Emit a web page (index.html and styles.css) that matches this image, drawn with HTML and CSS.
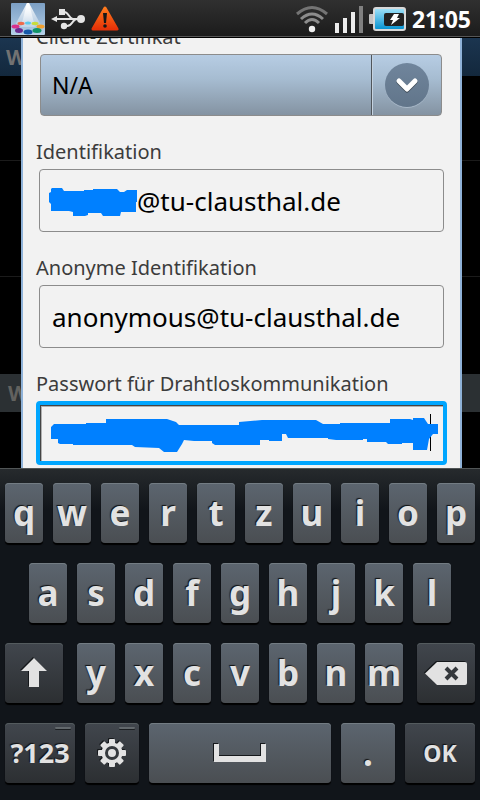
FILE: index.html
```html
<!DOCTYPE html>
<html lang="de">
<head>
    <meta charset="UTF-8">
    <meta name="viewport" content="width=device-width, initial-scale=1.0">
    <title>WLAN</title>
    <link rel="stylesheet" href="styles.css">
</head>
<body>
    <header class="statusbar">
        <div class="status-left">
            <svg width="34" height="32" viewBox="0 0 34 32">
                <defs>
                    <linearGradient id="sky" x1="0" y1="0" x2="0" y2="1">
                        <stop offset="0" stop-color="#7c9fc4"/>
                        <stop offset="1" stop-color="#b4d0e8"/>
                    </linearGradient>
                    <linearGradient id="beam" x1="0" y1="0" x2="0" y2="1">
                        <stop offset="0" stop-color="#fff"/>
                        <stop offset="1" stop-color="#fff" stop-opacity="0.15"/>
                    </linearGradient>
                </defs>
                <rect width="34" height="32" rx="1" fill="url(#sky)"/>
                <path d="M16 0h2l13 24H3z" fill="url(#beam)"/>
                <path d="M16 0h2l6 24H10z" fill="url(#beam)"/>
                <ellipse cx="17" cy="20" rx="3" ry="1.5" fill="#5cc8ea"/>
                <ellipse cx="10" cy="20.500" rx="3.500" ry="1.700" fill="#ee6a4a"/>
                <ellipse cx="24" cy="20.500" rx="3.500" ry="1.700" fill="#c8dc3c"/>
                <ellipse cx="4.500" cy="23.500" rx="4" ry="2" fill="#d8308c"/>
                <ellipse cx="29.500" cy="23.500" rx="4" ry="2" fill="#f0a030"/>
                <ellipse cx="8" cy="27.500" rx="4" ry="2.500" fill="#6a2c90"/>
                <ellipse cx="26" cy="27.500" rx="4.500" ry="2.500" fill="#109468"/>
                <ellipse cx="17" cy="29" rx="4.500" ry="2.500" fill="#1458a8"/>
            </svg>
            <svg width="34" height="22" viewBox="0 0 34 22" fill="none" stroke="#e4e4e4" stroke-width="2">
                <path d="M5 11h22"/>
                <path d="M11 4h2c5 0 5 7 9 7M13 18h3c6 0 5-7 10-7"/>
                <path d="M0 11l6-3v6zM8 1h6v6H8z" fill="#e4e4e4" stroke="none"/>
                <circle cx="30" cy="11" r="4" fill="#e4e4e4" stroke="none"/>
                <circle cx="13" cy="18" r="3.200" fill="#e4e4e4" stroke="none"/>
            </svg>
            <svg width="28" height="26" viewBox="0 0 28 26">
                <defs>
                    <linearGradient id="alert" x1="0" y1="0" x2="0" y2="1">
                        <stop offset="0" stop-color="#ff7a1c"/>
                        <stop offset="1" stop-color="#e63208"/>
                    </linearGradient>
                </defs>
                <path d="M14 2L26 23H2z" fill="url(#alert)" stroke="url(#alert)" stroke-width="3" stroke-linejoin="round"/>
                <path d="M12 7h4l-1 10h-2z" fill="#181818"/>
                <circle cx="14" cy="20" r="1.800" fill="#181818"/>
            </svg>
        </div>
        <div class="status-right">
            <svg width="34" height="28" viewBox="0 0 34 28" fill="none" stroke-width="3">
                <path d="M2 9q15-13 30 0" stroke="#747474"/>
                <path d="M6 14q11-10 22 0" stroke="#8c8c8c"/>
                <path d="M10 18q7-7 14 0" stroke="#8c8c8c"/>
                <circle cx="17" cy="24" r="3.200" fill="#eee"/>
            </svg>
            <svg width="28" height="28" viewBox="0 0 28 28" fill="#ececec">
                <path d="M0 18h4v10H0zM8 13h4v15H8zM16 7h4v21h-4z"/>
                <path d="M24 1h4v27h-4z" fill="#808080"/>
            </svg>
            <svg width="37" height="24" viewBox="0 0 37 24">
                <defs>
                    <linearGradient id="charge" x1="0" y1="0" x2="0" y2="1">
                        <stop offset="0" stop-color="#a4e4fa"/>
                        <stop offset="1" stop-color="#0090d0"/>
                    </linearGradient>
                </defs>
                <rect x="0" y="7" width="6" height="10" rx="1" fill="#c4c4c4"/>
                <rect x="5" y="1" width="31" height="22" rx="2" fill="url(#charge)" stroke="#d8d8d8" stroke-width="2"/>
                <rect x="15" y="6" width="20" height="13" rx="2" fill="#222"/>
                <path d="M25 7h5l-2 4h3l-9 7 2-5h-3z" fill="#fff"/>
            </svg>
            <span class="clock">21:05</span>
        </div>
    </header>

    <main class="screen">
        <div class="backdrop">
            <div class="backdrop-title">W</div>
            <div class="backdrop-row first"></div>
            <div class="backdrop-row"></div>
            <div class="backdrop-row last"></div>
            <div class="backdrop-title section">W</div>
        </div>

        <form class="dialog">
            <div class="field">
                <label for="cert">Client-Zertifikat</label>
                <div class="control select">
                    <select class="box dropdown" id="cert">
                        <option>N/A</option>
                    </select>
                    <span class="arrow">
                        <svg width="24" height="18" viewBox="0 0 24 18" fill="none" stroke-width="5" stroke-linecap="round" stroke-linejoin="round">
                            <path d="M4 6l8 8 8-8" stroke="#3c4854"/>
                            <path d="M4 5l8 8 8-8" stroke="#fff"/>
                        </svg>
                    </span>
                </div>
            </div>
            <div class="field">
                <label for="identity">Identifikation</label>
                <div class="control">
                    <input class="box identity" id="identity" type="text" value="@tu-clausthal.de">
                    <svg class="scribble" width="404" height="63" viewBox="0 0 404 63">
                        <path d="M10 24L12 23V20L13 19H23L25 22H45V21H54V20H78L81 23H85L88 21H98V33H97V43H82L81 47H64L62 44H49V46L46 47H34V43L30 42H12V35L10 33z"/>
                    </svg>
                </div>
            </div>
            <div class="field">
                <label for="anonymous">Anonyme Identifikation</label>
                <div class="control">
                    <input class="box" id="anonymous" type="text" value="anonymous@tu-clausthal.de">
                </div>
            </div>
            <div class="field">
                <label for="password">Passwort für Drahtloskommunikation</label>
                <div class="control focused">
                    <input class="box" id="password" type="password">
                    <svg class="scribble" width="411" height="64" viewBox="0 0 411 64">
                        <path class="caret" d="M394 13h1v37h-1z"/>
                        <path d="M15 26L18 23H50V22H70V18H131L140 21L143 24H203V21L226 19H280L287 23H304V22H354V18H374L377 19V17H388L392 23H402V33H397L393 38L391 49H377V42H366V43H352L350 41H331V38H327V39H300L292 38V37H252L250 33H246V40H233V39H224V44H179L176 42V40H158L148 39L146 43L141 51H128L123 47L99 46L96 44H37V43H24L22 42V38H15z"/>
                    </svg>
                </div>
            </div>
        </form>
    </main>

    <section class="keyboard">
        <div class="key-row">
            <button class="key">q</button>
            <button class="key">w</button>
            <button class="key">e</button>
            <button class="key">r</button>
            <button class="key">t</button>
            <button class="key">z</button>
            <button class="key">u</button>
            <button class="key">i</button>
            <button class="key">o</button>
            <button class="key">p</button>
        </div>
        <div class="key-row inset">
            <button class="key">a</button>
            <button class="key">s</button>
            <button class="key">d</button>
            <button class="key">f</button>
            <button class="key">g</button>
            <button class="key">h</button>
            <button class="key">j</button>
            <button class="key">k</button>
            <button class="key">l</button>
        </div>
        <div class="key-row">
            <button class="key dark shift" aria-label="Umschalt">
                <svg class="icon" width="26" height="30" viewBox="0 0 26 30">
                    <path d="M13 0l13 13h-8v16H8V13H0z"/>
                </svg>
            </button>
            <button class="key">y</button>
            <button class="key">x</button>
            <button class="key">c</button>
            <button class="key">v</button>
            <button class="key">b</button>
            <button class="key">n</button>
            <button class="key">m</button>
            <button class="key dark delete" aria-label="Löschen">
                <svg class="icon" width="42" height="23" viewBox="0 0 42 23">
                    <path d="M0 11.500L12 0h28q2 0 2 2v19q0 2-2 2H12z"/>
                    <path class="cut" d="M21 6l11 11M32 6L21 17"/>
                </svg>
            </button>
        </div>
        <div class="key-row">
            <button class="key dark wide more symbols">?123</button>
            <button class="key dark medium more" aria-label="Einstellungen">
                <svg class="icon" width="28" height="28" viewBox="-14 -14 28 28">
                    <g id="teeth">
                        <rect x="-3" y="-14" width="6" height="28" rx="1"/>
                        <rect x="-14" y="-3" width="28" height="6" rx="1"/>
                    </g>
                    <use href="#teeth" transform="rotate(45)"/>
                    <circle r="10.500"/>
                    <circle class="gear-ring" r="5.500"/>
                </svg>
            </button>
            <button class="key space" aria-label="Leerzeichen">
                <svg class="icon" width="52" height="18" viewBox="0 0 52 18">
                    <path d="M0 0h5v12h42V0h5v18H0z"/>
                </svg>
            </button>
            <button class="key medium">.</button>
            <button class="key dark wide ok">OK</button>
        </div>
    </section>
</body>
</html>
```
FILE: styles.css
```css
* {
    box-sizing: border-box;
}
body {
    margin: 0;
    height: 100vh;
    display: flex;
    flex-direction: column;
    background: #000;
    font-family: "Noto Sans", sans-serif;
}
svg {
    display: block;
    flex: none;
}

/* Status bar */
.statusbar {
    flex: none;
    height: 38px;
    padding: 0 9px 0 11px;
    display: flex;
    justify-content: space-between;
    background: linear-gradient(#303030, #1b1b1b);
    border-bottom: 1px solid #000;
    box-shadow: inset 0 -1px #565656;
}
.status-left,
.status-right {
    display: flex;
    align-items: center;
    gap: 6px;
}
.clock {
    color: #fff;
    font-size: 23px;
    font-weight: bold;
}

/* Dimmed page with the dialog over it */
.screen {
    flex: 1;
    min-height: 0;
    display: grid;
    grid-template: minmax(0, 1fr) / minmax(0, 1fr);
    overflow: hidden;
}
.backdrop,
.dialog {
    grid-area: 1 / 1;
}
.backdrop-title {
    height: 38px;
    padding-left: 6px;
    background: linear-gradient(#1b3550, #13283d);
    color: #727272;
    font-size: 21px;
    font-weight: bold;
    line-height: 38px;
}
.backdrop-title.section {
    padding-left: 8px;
    background: #2b3033;
    color: #62625f;
}
.backdrop-row {
    height: 116px;
    border-bottom: 1px solid #1b1b1b;
}
.backdrop-row.first {
    height: 85px;
}
.backdrop-row.last {
    height: 97px;
    border: 0;
}
.dialog {
    margin: 0 18px 0 21px;
    padding: 0 16px 3px 13px;
    display: flex;
    flex-direction: column;
    justify-content: flex-end;
    gap: 22px;
    overflow: hidden;
    background: #f2f2f2;
    border: solid #8fb2d8;
    border-width: 0 2px;
}
.field {
    flex: none;
}
.field label {
    display: block;
    padding-bottom: 3px;
    color: #3c3c3c;
    font-size: 20px;
    line-height: 28px;
    white-space: nowrap;
}
.control {
    position: relative;
    margin-left: 3px;
}
.box {
    display: block;
    width: 100%;
    height: 63px;
    padding: 0 12px;
    background: #f2f2f2;
    border: 1px solid #8c8c8c;
    border-radius: 4px;
    color: #000;
    font-family: inherit;
    font-size: 26px;
    outline: 0;
}
.identity {
    padding-left: 97px;
}
.select {
    margin: 0 2px 0 4px;
}
.dropdown {
    height: 62px;
    padding: 0 11px;
    appearance: none;
    background: linear-gradient(#b7cde4, #a6bcd1 40%, #8493a2);
    font-size: 23px;
}
.arrow {
    position: absolute;
    top: 1px;
    right: 1px;
    bottom: 1px;
    width: 70px;
    display: flex;
    align-items: center;
    justify-content: center;
    border-left: 1px solid #50565c;
    box-shadow: inset 1px 0 #c4d2e0;
    pointer-events: none;
}
.arrow::before {
    content: "";
    position: absolute;
    width: 44px;
    height: 44px;
    border-radius: 50%;
    background: linear-gradient(#70859c, #61758a);
    box-shadow: 0 1px #a8b8c8;
}
.arrow svg {
    position: relative;
}
.focused {
    margin: 0 -3px 0 0;
}
.focused .box {
    height: 64px;
    border: 4px solid #00a6ff;
    box-shadow: inset 1px 1px #444, inset 2px 2px #b0b0b0;
}
.scribble {
    position: absolute;
    top: 0;
    left: 0;
    fill: #0080ff;
    pointer-events: none;
}
.caret {
    fill: #000;
}

/* Keyboard */
.keyboard {
    flex: none;
    padding: 14px 5px 17px;
    display: flex;
    flex-direction: column;
    gap: 20px;
    background: linear-gradient(#262a2d, #11151a 40px);
    border-top: 1px solid #515556;
}
.key-row {
    display: flex;
    gap: 10px;
}
.key-row.inset {
    padding: 0 24px;
}
.key {
    flex: 38 1 0;
    min-width: 0;
    height: 60px;
    padding: 0;
    display: flex;
    align-items: center;
    justify-content: center;
    background: linear-gradient(#5c656f, #4a4e52);
    border: 0;
    border-radius: 4px;
    box-shadow: inset 0 1px #737c83, 0 2px 1px #000;
    color: #e2e2e2;
    font-family: inherit;
    font-size: 35px;
    font-weight: bold;
    line-height: 62px;
    text-shadow: -1px -1px 1px #111;
}
.key.dark {
    background: linear-gradient(#41464d, #2c2f32);
    box-shadow: inset 0 1px #545b5e, 0 2px 1px #000;
}
.key.shift,
.key.delete {
    flex-grow: 58;
}
.key.shift {
    margin-right: 4px;
}
.key.delete {
    margin-left: 4px;
}
.key.wide {
    flex-grow: 70;
}
.key.medium {
    flex-grow: 54;
}
.key.space {
    flex-grow: 182;
}
.key.symbols {
    font-size: 27px;
}
.key.ok {
    font-size: 23px;
}
.more {
    position: relative;
}
.more::after {
    content: "";
    position: absolute;
    top: 4px;
    right: 4px;
    width: 16px;
    height: 2px;
    border-radius: 1px;
    background: #62686c;
    box-shadow: 0 1px #1c1f22;
}
.icon {
    fill: #e2e2e2;
    overflow: visible;
    filter: drop-shadow(-1px -1px 0 #15181b);
}
.cut {
    stroke: #35393d;
    stroke-width: 4;
}
.gear-ring {
    stroke: #35393d;
    stroke-width: 3;
}
```
